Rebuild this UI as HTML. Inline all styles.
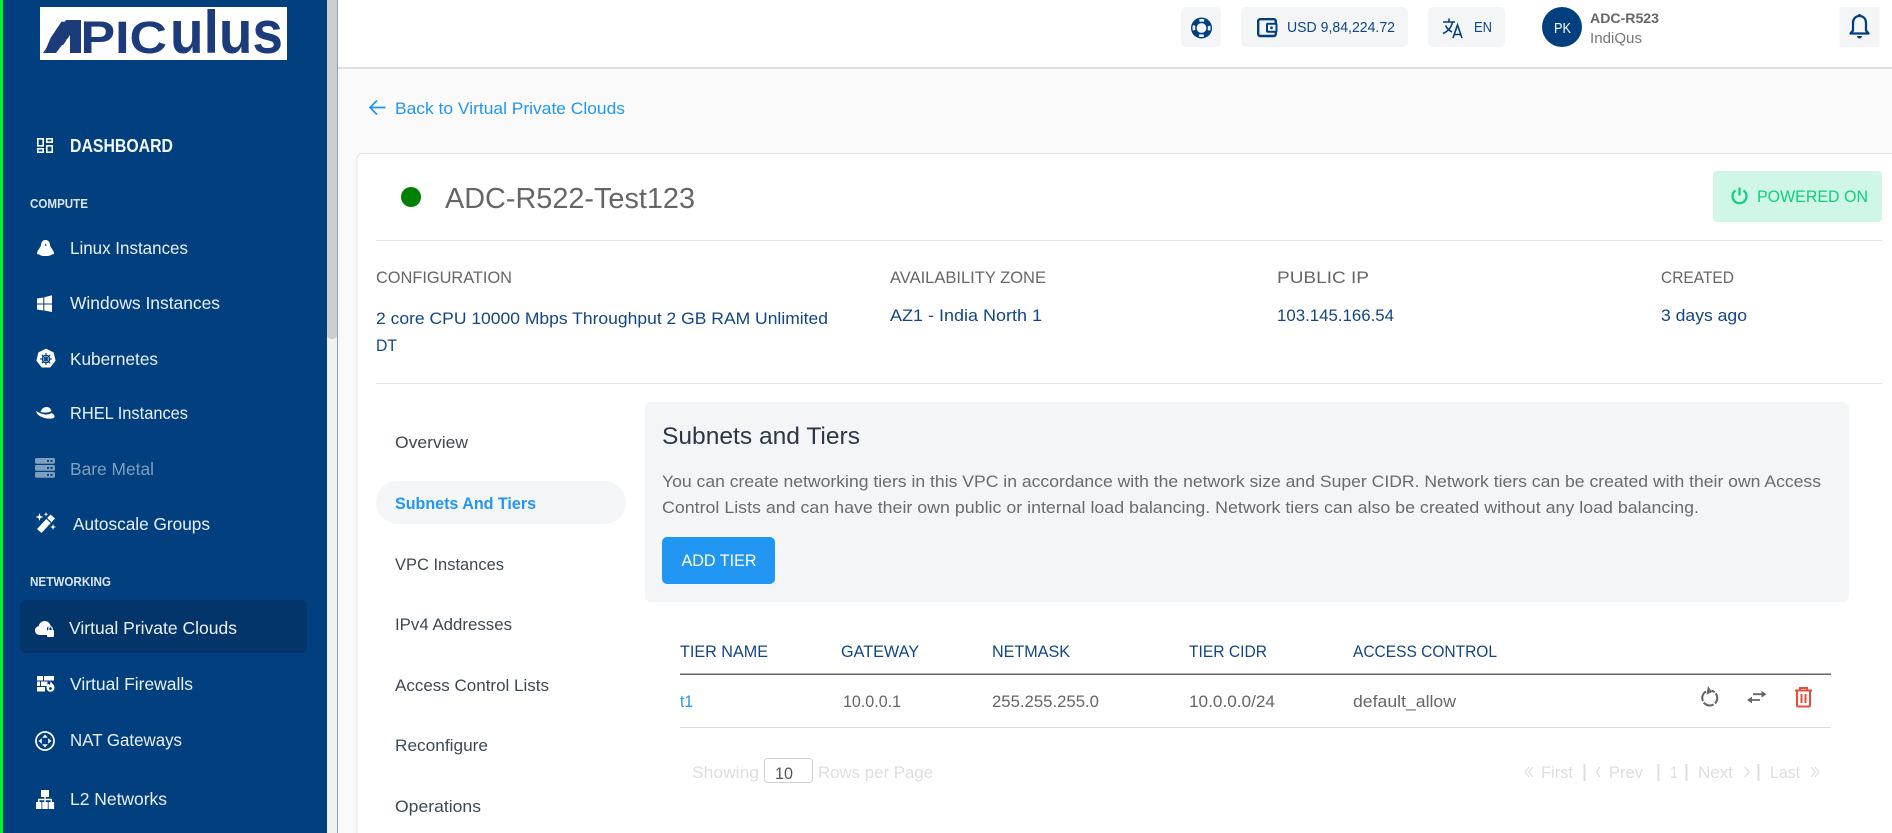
<!DOCTYPE html>
<html lang="en"><head><meta charset="utf-8"><title>ADC-R522-Test123</title>
<style>
html,body{margin:0;padding:0;width:1892px;height:833px;overflow:hidden;background:#fafafa}
svg{display:block}
text{font-family:"Liberation Sans",sans-serif}
.s{font-size:17.5px;fill:#eaf0f6}
.n{font-size:17px;fill:#3d4852}
.l{font-size:17px;fill:#666}
.v{font-size:17px;fill:#124586}
.p{font-size:16.5px;fill:#6b6b6b}
.t{font-size:16.5px;fill:#666}
.g{font-size:17px;fill:#dedede}
</style></head><body>
<svg xmlns="http://www.w3.org/2000/svg" width="1892" height="833" viewBox="0 0 1892 833">
<rect width="1892" height="833" fill="#fafafa"/>
<!-- sidebar -->
<rect width="327" height="833" fill="#013f7f"/>
<rect width="3" height="833" fill="#00f52e"/>
<rect x="327" width="10" height="833" fill="#f1f1f1"/>
<rect x="327" y="-6" width="10" height="345" rx="4" fill="#cdcdcd"/>
<rect x="337" width="1" height="833" fill="#8fa0b0"/>
<rect x="40" y="7" width="247" height="53" fill="#fff"/>
<text x="43" y="53" font-size="45" font-weight="700" fill="#1b3b7b" textLength="124" lengthAdjust="spacingAndGlyphs">APIC</text>
<polygon points="57,54 70,54 70,35" fill="#fff"/>
<polygon points="41,18 64,18 41,52" fill="#fff"/>
<polygon points="43,53 56,53 78,24 78,20 66,20" fill="#1b3b7b"/>
<polygon points="70,53 81,53 81,20 70,20" fill="#1b3b7b"/>
<text x="170" y="53" font-size="60" font-weight="700" fill="#1b3b7b" textLength="113" lengthAdjust="spacingAndGlyphs">ulus</text>

<g fill="none" stroke="#fff" stroke-width="1.600"><rect x="37.800" y="138.800" width="5.400" height="7"/><rect x="46.800" y="138.800" width="5.400" height="3.400"/><rect x="37.800" y="148.800" width="5.400" height="3.400"/><rect x="46.800" y="145.800" width="5.400" height="6.400"/></g>
<text x="70" y="152" font-size="18" font-weight="700" fill="#f4f7fa" textLength="103" lengthAdjust="spacingAndGlyphs">DASHBOARD</text>
<text x="30" y="208" font-size="13" font-weight="700" fill="#dbe5ef" textLength="58" lengthAdjust="spacingAndGlyphs">COMPUTE</text>

<path d="M45.500 240c3 0 4.500 2.500 4.500 5c0 2 3.500 5 4 8c.3 2-1.500 1.200-2 1.200c-1 1.300-3.500 1.800-6.500 1.800s-5.500-.5-6.500-1.800c-.5 0-2.300.8-2-1.200c.5-3 4-6 4-8c0-2.500 1.500-5 4.500-5z" fill="#fff"/><circle cx="45.500" cy="245" r=".9" fill="#013f7f"/>
<text class="s" x="70" y="254" textLength="118" lengthAdjust="spacingAndGlyphs">Linux Instances</text>

<path d="M37 298.500l6.300-1v6h-6.300zM44.300 297.200l7.700-2v8.300h-7.700zM37 304.500h6.300v6l-6.300-1zM44.300 304.500h7.700v7.500l-7.700-1.500z" fill="#fff"/>
<text class="s" x="70" y="309" textLength="150" lengthAdjust="spacingAndGlyphs">Windows Instances</text>

<path d="M46 349.500l7 3.400 1.800 7.600-4.900 6.200h-7.800l-4.900-6.200 1.800-7.600z" fill="#fff" stroke="#fff" stroke-width="1.500" stroke-linejoin="round"/>
<g fill="none" stroke="#013f7f" stroke-width="1.100"><circle cx="46" cy="359" r="3.800"/><circle cx="46" cy="359" r="1"/><path d="M46 353v12M40 359h12M41.800 354.800l8.400 8.400M50.200 354.800l-8.400 8.400"/></g>
<text class="s" x="70" y="365" textLength="88" lengthAdjust="spacingAndGlyphs">Kubernetes</text>

<path d="M40.500 412c1-3 3-5 6-5c2.500 0 4 1 5 4c-3 2-7 2-11 1z" fill="#fff"/>
<path d="M36.500 411c-1 3 5 7 11 7.500c3 .3 7 .3 7-2c0-1.500-1-2.500-3-3.500c-3 2.500-10 2-15-2z" fill="#fff"/>
<text class="s" x="70" y="419" textLength="118" lengthAdjust="spacingAndGlyphs">RHEL Instances</text>

<g fill="#7f9fbf"><rect x="35" y="458" width="20" height="5.800" rx="1.500"/><rect x="35" y="465" width="20" height="5.800" rx="1.500"/><rect x="35" y="472" width="20" height="5.800" rx="1.500"/></g>
<g fill="#013f7f"><rect x="47" y="460" width="2" height="1.800"/><rect x="50.500" y="460" width="2" height="1.800"/><rect x="47" y="467" width="2" height="1.800"/><rect x="50.500" y="467" width="2" height="1.800"/><rect x="47" y="474" width="2" height="1.800"/><rect x="50.500" y="474" width="2" height="1.800"/></g>
<text x="70" y="475" font-size="17.500" fill="#7f9fbf" textLength="84" lengthAdjust="spacingAndGlyphs">Bare Metal</text>

<path d="M37 529l13.500-14.500 4.500 4-13.500 14.500z" fill="#fff"/><path d="M46.700 518.500l4.300 4" stroke="#013f7f" stroke-width="1.200"/>
<path d="M39.500 513l1 3 3 1-3 1-1 3-1-3-3-1 3-1zM46 512l.6 1.700 1.700.6-1.700.6-.6 1.700-.6-1.700-1.700-.6 1.700-.6zM53 524l.8 2.200 2.200.8-2.200.8-.8 2.200-.8-2.200-2.200-.8 2.200-.8z" fill="#fff"/>
<text class="s" x="73" y="530" textLength="137" lengthAdjust="spacingAndGlyphs">Autoscale Groups</text>

<text x="30" y="586" font-size="13" font-weight="700" fill="#dbe5ef" textLength="81" lengthAdjust="spacingAndGlyphs">NETWORKING</text>
<rect x="20" y="600" width="287" height="53" rx="6" fill="#03346a"/>
<path d="M40 635c-3 0-5-2-5-4.500 0-2.200 1.500-4 3.600-4.300.8-2.900 3-5.200 6-5.200 3 0 5.500 2 6 5l-3.600 1.500v7.500z" fill="#fff"/>
<rect x="47" y="630" width="7" height="7" rx="1" fill="#fff"/><path d="M48.800 630v-1.500a1.700 1.700 0 0 1 3.400 0v1.500" fill="none" stroke="#fff" stroke-width="1.200"/>
<text class="s" x="69" y="634" textLength="168" lengthAdjust="spacingAndGlyphs">Virtual Private Clouds</text>

<g fill="#fff"><rect x="37" y="676" width="6" height="4.500"/><rect x="44" y="676" width="10" height="4.500"/><rect x="37" y="681.500" width="3" height="4.500"/><rect x="41" y="681.500" width="6.500" height="4.500"/><rect x="37" y="687" width="8" height="4.500"/><path d="M50.500 681c.5 2 4 3 4 6.800a4 4 0 0 1-8 0c0-2 1.300-2.700 1.800-4 .6.500 1 1 1.200 1.500.5-1 1-2.800 1-4.300z"/></g><circle cx="50.500" cy="688.500" r="1.400" fill="#013f7f"/>
<text class="s" x="70" y="690" textLength="123" lengthAdjust="spacingAndGlyphs">Virtual Firewalls</text>

<circle cx="45" cy="741" r="9" fill="none" stroke="#fff" stroke-width="1.700"/>
<path d="M45 734.500l2.800 3.300h-5.600zM45 747.500l2.800-3.300h-5.600zM38.500 741l3.300 2.800v-5.600zM51.500 741l-3.300 2.800v-5.600z" fill="#fff"/>
<text class="s" x="70" y="746" textLength="112" lengthAdjust="spacingAndGlyphs">NAT Gateways</text>

<g fill="#fff"><rect x="41" y="790" width="8" height="7"/><rect x="36" y="802" width="5.500" height="7"/><rect x="42.300" y="802" width="5.500" height="7"/><rect x="48.600" y="802" width="5.500" height="7"/></g>
<path d="M45 797v5M38.800 802v-2.500h12.500v2.500" fill="none" stroke="#fff" stroke-width="1.400"/>
<text class="s" x="70" y="805" textLength="97" lengthAdjust="spacingAndGlyphs">L2 Networks</text>

<!-- header -->
<rect x="338" width="1554" height="67" fill="#fff"/>
<rect x="338" y="67" width="1554" height="2" fill="#dedede"/>
<rect x="1181" y="7" width="40" height="40" rx="5" fill="#f4f5f7"/>
<circle cx="1201.500" cy="28" r="7.700" fill="none" stroke="#013f7f" stroke-width="5.600"/>
<circle cx="1201.500" cy="28" r="7.700" fill="none" stroke="#f4f5f7" stroke-width="2.600" stroke-dasharray="4.800 7.300" stroke-dashoffset="2.400"/>
<rect x="1241" y="7" width="167" height="40" rx="5" fill="#f4f5f7"/>
<rect x="1258.200" y="19.200" width="17.600" height="16.800" rx="2" fill="none" stroke="#013f7f" stroke-width="2.400"/>
<rect x="1267" y="23.800" width="9.500" height="8" rx="1" fill="#f4f5f7" stroke="#013f7f" stroke-width="2"/><circle cx="1271.500" cy="27.800" r="1.400" fill="#013f7f"/>
<text x="1287" y="32" font-size="14.500" fill="#124586" textLength="108" lengthAdjust="spacingAndGlyphs">USD 9,84,224.72</text>
<rect x="1428" y="7" width="77" height="40" rx="5" fill="#f4f5f7"/>
<path d="M1443 22h12M1449 18.500v3.500M1452.500 22c-1 5-4 9-9.500 11.500M1445.500 25.500c1.500 3 3.500 5 6.500 6.500M1453 38l4.500-13 4.500 13M1454.800 34.500h5.400" fill="none" stroke="#013f7f" stroke-width="1.600"/>
<text x="1474" y="32" font-size="14.500" fill="#124586" textLength="18" lengthAdjust="spacingAndGlyphs">EN</text>
<circle cx="1562" cy="27" r="20" fill="#013f7f"/>
<text x="1554" y="33" font-size="14.500" fill="#fff" textLength="17" lengthAdjust="spacingAndGlyphs">PK</text>
<text x="1590" y="23" font-size="14" font-weight="700" fill="#666" textLength="69" lengthAdjust="spacingAndGlyphs">ADC-R523</text>
<text x="1590" y="43" font-size="14.500" fill="#777" textLength="52" lengthAdjust="spacingAndGlyphs">IndiQus</text>
<rect x="1839.500" y="7" width="40" height="40" fill="#f4f5f7"/>
<path d="M1859.500 16c-4 0-6.500 3-6.500 7v7.500l-2.500 3h18l-2.500-3V23c0-4-2.500-7-6.500-7zM1859.500 14v2" fill="none" stroke="#013f7f" stroke-width="2.300" stroke-linejoin="round"/>
<path d="M1857 36h5a2.500 2.500 0 0 1-5 0z" fill="#013f7f"/>

<!-- back -->
<path d="M385.500 107.500h-15M377 100.500l-7 7 7 7" fill="none" stroke="#2196f3" stroke-width="1.700"/>
<text x="395" y="114" font-size="17" fill="#2196f3" textLength="230" lengthAdjust="spacingAndGlyphs">Back to Virtual Private Clouds</text>

<!-- card -->
<rect x="357" y="153.500" width="1540" height="690" rx="5" fill="#fff" stroke="#e4e4e4"/>
<circle cx="411" cy="197" r="10" fill="#008000"/>
<text x="445" y="208" font-size="29" fill="#666" textLength="250" lengthAdjust="spacingAndGlyphs">ADC-R522-Test123</text>
<rect x="1713" y="171" width="169" height="51" rx="4" fill="#cff6e6"/>
<path d="M1735.500 190.500a7 7 0 1 0 8 0M1739.500 187.500v8" fill="none" stroke="#0fce7c" stroke-width="2.200"/>
<text x="1757" y="202" font-size="17" fill="#0fce7c" textLength="111" lengthAdjust="spacingAndGlyphs">POWERED ON</text>
<rect x="376" y="240" width="1506" height="1" fill="#e4e4e4"/>

<text class="l" x="376" y="283" textLength="136" lengthAdjust="spacingAndGlyphs">CONFIGURATION</text>
<text class="l" x="890" y="283" textLength="156" lengthAdjust="spacingAndGlyphs">AVAILABILITY ZONE</text>
<text class="l" x="1277" y="283" textLength="92" lengthAdjust="spacingAndGlyphs">PUBLIC IP</text>
<text class="l" x="1661" y="283" textLength="73" lengthAdjust="spacingAndGlyphs">CREATED</text>
<text class="v" x="376" y="324" textLength="452" lengthAdjust="spacingAndGlyphs">2 core CPU 10000 Mbps Throughput 2 GB RAM Unlimited</text>
<text class="v" x="376" y="351" textLength="21" lengthAdjust="spacingAndGlyphs">DT</text>
<text class="v" x="890" y="321" textLength="152" lengthAdjust="spacingAndGlyphs">AZ1 - India North 1</text>
<text class="v" x="1277" y="321" textLength="117" lengthAdjust="spacingAndGlyphs">103.145.166.54</text>
<text class="v" x="1661" y="321" textLength="86" lengthAdjust="spacingAndGlyphs">3 days ago</text>
<rect x="376" y="383" width="1506" height="1" fill="#e4e4e4"/>

<!-- left nav -->
<text class="n" x="395" y="448" textLength="73" lengthAdjust="spacingAndGlyphs">Overview</text>
<rect x="376" y="481" width="250" height="43" rx="21.500" fill="#f4f5f7"/>
<text x="395" y="509" font-size="17" font-weight="700" fill="#2196f3" textLength="141" lengthAdjust="spacingAndGlyphs">Subnets And Tiers</text>
<text class="n" x="395" y="570" textLength="109" lengthAdjust="spacingAndGlyphs">VPC Instances</text>
<text class="n" x="395" y="630" textLength="117" lengthAdjust="spacingAndGlyphs">IPv4 Addresses</text>
<text class="n" x="395" y="691" textLength="154" lengthAdjust="spacingAndGlyphs">Access Control Lists</text>
<text class="n" x="395" y="751" textLength="93" lengthAdjust="spacingAndGlyphs">Reconfigure</text>
<text class="n" x="395" y="812" textLength="86" lengthAdjust="spacingAndGlyphs">Operations</text>

<!-- panel -->
<rect x="645" y="402" width="1204" height="200" rx="6" fill="#f4f5f7"/>
<text x="662" y="444" font-size="24" fill="#2d3748" textLength="198" lengthAdjust="spacingAndGlyphs">Subnets and Tiers</text>
<text class="p" x="662" y="487" textLength="1159" lengthAdjust="spacingAndGlyphs">You can create networking tiers in this VPC in accordance with the network size and Super CIDR. Network tiers can be created with their own Access</text>
<text class="p" x="662" y="513" textLength="1037" lengthAdjust="spacingAndGlyphs">Control Lists and can have their own public or internal load balancing. Network tiers can also be created without any load balancing.</text>
<rect x="662" y="537" width="113" height="47" rx="5" fill="#2196f3"/>
<text x="681.500" y="566" font-size="17" fill="#fff" textLength="75" lengthAdjust="spacingAndGlyphs">ADD TIER</text>

<!-- table -->
<text class="v" x="680" y="657" textLength="88" lengthAdjust="spacingAndGlyphs">TIER NAME</text>
<text class="v" x="841" y="657" textLength="78" lengthAdjust="spacingAndGlyphs">GATEWAY</text>
<text class="v" x="992" y="657" textLength="78" lengthAdjust="spacingAndGlyphs">NETMASK</text>
<text class="v" x="1189" y="657" textLength="78" lengthAdjust="spacingAndGlyphs">TIER CIDR</text>
<text class="v" x="1353" y="657" textLength="144" lengthAdjust="spacingAndGlyphs">ACCESS CONTROL</text>
<rect x="680" y="673.500" width="1151" height="1.500" fill="#666"/>
<text x="680" y="707" font-size="16.500" fill="#2196f3" textLength="13" lengthAdjust="spacingAndGlyphs">t1</text>
<text class="t" x="843" y="707" textLength="58" lengthAdjust="spacingAndGlyphs">10.0.0.1</text>
<text class="t" x="992" y="707" textLength="107" lengthAdjust="spacingAndGlyphs">255.255.255.0</text>
<text class="t" x="1189" y="707" textLength="86" lengthAdjust="spacingAndGlyphs">10.0.0.0/24</text>
<text class="t" x="1353" y="707" textLength="103" lengthAdjust="spacingAndGlyphs">default_allow</text>
<rect x="680" y="727" width="1151" height="1" fill="#dedede"/>

<path d="M1706 691.500a7.500 7.500 0 1 0 5.500 -.8" fill="none" stroke="#666" stroke-width="2.100" stroke-dasharray="11 1.500"/>
<path d="M1708 686l4 6-5.500 2.500z" fill="#666"/>
<path d="M1753 694.200h10M1760 700h-10" stroke="#666" stroke-width="1.800"/>
<path d="M1761.500 690.800l5 3.400-5 3.400zM1752 696.600l-5 3.400 5 3.400z" fill="#666"/>
<path d="M1795 690.500h17M1800 690v-2h7v2" fill="none" stroke="#e74c3c" stroke-width="2"/>
<path d="M1797 691v14.500a1 1 0 0 0 1 1h11a1 1 0 0 0 1-1V691" fill="none" stroke="#e74c3c" stroke-width="2"/>
<path d="M1801.500 694v9M1805.500 694v9" stroke="#e74c3c" stroke-width="2"/>

<!-- pagination -->
<text class="g" x="692" y="778" textLength="67" lengthAdjust="spacingAndGlyphs">Showing</text>
<rect x="764.500" y="758.500" width="48" height="24" rx="3" fill="#fff" stroke="#ccd2da"/>
<text x="775" y="779" font-size="16.500" fill="#555" textLength="18" lengthAdjust="spacingAndGlyphs">10</text>
<text class="g" x="818" y="778" textLength="115" lengthAdjust="spacingAndGlyphs">Rows per Page</text>
<path d="M1529 767l-4 5 4 5M1533 767l-4 5 4 5M1600 767l-3.500 5 3.500 5M1745 767l4 5-4 5M1811 767l4 5-4 5M1815 767l4 5-4 5" fill="none" stroke="#dedede" stroke-width="1.200"/>
<text class="g" x="1541" y="778" textLength="32" lengthAdjust="spacingAndGlyphs">First</text>
<text class="g" x="1609" y="778" textLength="34" lengthAdjust="spacingAndGlyphs">Prev</text>
<text class="g" x="1670" y="778" textLength="8" lengthAdjust="spacingAndGlyphs">1</text>
<text class="g" x="1698" y="778" textLength="35" lengthAdjust="spacingAndGlyphs">Next</text>
<text class="g" x="1770" y="778" textLength="30" lengthAdjust="spacingAndGlyphs">Last</text>
<g fill="#dedede"><rect x="1583.500" y="764" width="2" height="17"/><rect x="1657.500" y="764" width="2" height="17"/><rect x="1685.500" y="764" width="2" height="17"/><rect x="1757.500" y="764" width="2" height="17"/></g>
</svg>
</body></html>
